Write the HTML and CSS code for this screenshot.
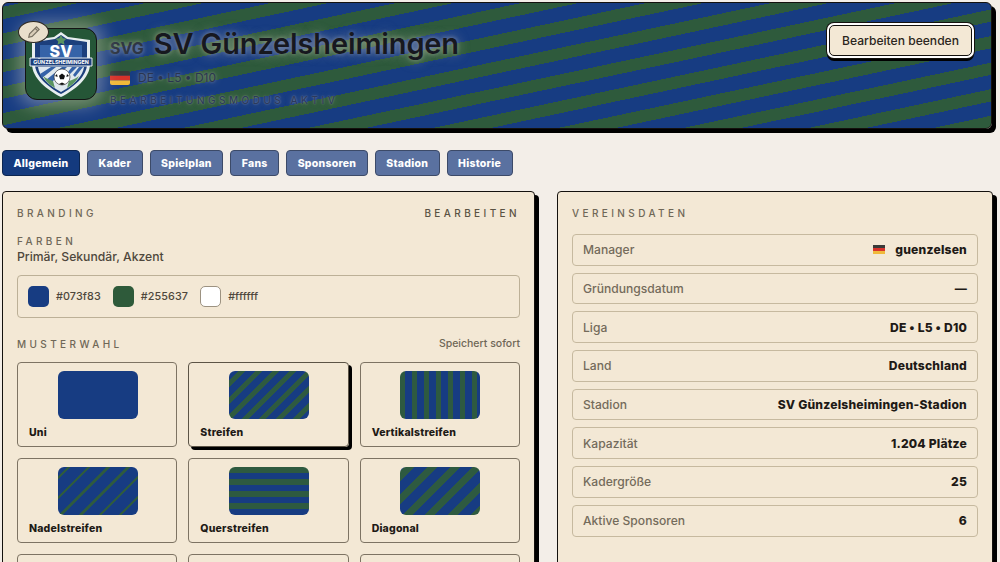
FILE: index.html
```html
<!doctype html>
<html lang="de">
  <head>
    <meta charset="UTF-8" />
    <meta name="viewport" content="width=device-width, initial-scale=1.0" />
    <title>SV Günzelsheimingen</title>
    <link rel="stylesheet" href="styles.css">
  </head>

  <body>
    <!-- Header -->
    <header class="hero">
      <div class="hero-main">
        <div class="crest-wrap">
          <button class="crest-edit" aria-label="Logo bearbeiten">
            <svg width="14" height="14" viewBox="0 0 12 12">
              <path d="M1.500 10.500 L2.200 7.600 L8.200 1.600 L10.400 3.800 L4.400 9.800 Z" fill="#d9cdb8" stroke="#7a7263" stroke-width="1"/>
              <path d="M7 2.800 L9.200 5" stroke="#7a7263" stroke-width="1"/>
            </svg>
          </button>
          <div class="crest">
            <svg width="68" height="68" viewBox="0 0 68 68">
              <path d="M34 2 L41 7 L63 10 L63 34 C63 48 48 60 34 67 C20 60 5 48 5 34 L5 10 L27 7 Z" fill="#e8eef0"/>
              <path d="M34 5 L40 9 L60 12 L60 34 C60 46 47 57 34 64 C21 57 8 46 8 34 L8 12 L28 9 Z" fill="#1c3f7c"/>
              <path d="M13 15 L55 15 L55 28 L13 28 Z" fill="#3563a8"/>
              <path d="M34 5 l1.800 3.300 3.600.5-2.600 2.500.7 3.500-3.500-1.700-3.500 1.700.7-3.500-2.600-2.500 3.600-.5z" fill="#5a9460"/>
              <text x="34" y="27" class="crest-sv">SV</text>
              <path d="M3 28 L65 28 L65 36 L3 36 Z" fill="#1c3f7c" stroke="#e8eef0" stroke-width="1"/>
              <text x="34" y="34" class="crest-name">GÜNZELSHEIMINGEN</text>
              <path d="M11 37 L57 37 C56 46 47 55 34 62 C21 55 12 46 11 37 Z" fill="#dfe8ee"/>
              <path d="M13 44 L24 37 L29 37 L15 48 Z M19 50 L35 37 L40 37 L23 54 Z M45 37 L50 37 L43 44 L41 42 Z M52 37 L56 37 L48 47 L46 45 Z" fill="#3563a8"/>
              <path d="M16 46 C19 52 23 55 28 58 L26 51 C23 50 20 49 16 46 Z M52 46 C49 52 45 55 40 58 L42 51 C45 50 48 49 52 46 Z" fill="#5a9460"/>
              <circle cx="35" cy="47" r="8" fill="#fff" stroke="#222" stroke-width=".6"/>
              <path d="M35 43.500 l3 2.200-1.100 3.500h-3.800l-1.100-3.500z M28 46 l2-2 .6 3z M42 46 l-2-2-.6 3z M32 54 l3 1 3-1-3-1.500z" fill="#111"/>
            </svg>
          </div>
        </div>

        <div class="hero-text">
          <div class="hero-title">
            <span class="hero-short">SVG</span>
            <h1>SV Günzelsheimingen</h1>
          </div>
          <div class="hero-meta">
            <svg class="flag flag-hero" viewBox="0 0 3 2" preserveAspectRatio="none">
              <rect width="3" height=".67" fill="#3a3a38"/>
              <rect y=".67" width="3" height=".67" fill="#d8322a"/>
              <rect y="1.340" width="3" height=".66" fill="#f0b93a"/>
            </svg>
            <span>DE • L5 • D10</span>
          </div>
          <div class="hero-mode">BEARBEITUNGSMODUS AKTIV</div>
        </div>
      </div>
      <button class="hero-btn">Bearbeiten beenden</button>
    </header>

    <!-- Tabs -->
    <nav class="tabs">
      <a class="tab active">Allgemein</a>
      <a class="tab">Kader</a>
      <a class="tab">Spielplan</a>
      <a class="tab">Fans</a>
      <a class="tab">Sponsoren</a>
      <a class="tab">Stadion</a>
      <a class="tab">Historie</a>
    </nav>

    <main class="columns">
      <!-- Branding -->
      <section class="card">
        <div class="card-head">
          <span class="eyebrow">BRANDING</span>
          <span class="eyebrow eyebrow-strong">BEARBEITEN</span>
        </div>

        <div class="eyebrow sub-label">FARBEN</div>
        <div class="sub-text">Primär, Sekundär, Akzent</div>

        <div class="colors">
          <span class="color"><i class="chip chip-primary"></i>#073f83</span>
          <span class="color"><i class="chip chip-secondary"></i>#255637</span>
          <span class="color"><i class="chip chip-accent"></i>#ffffff</span>
        </div>

        <div class="pattern-head">
          <span class="eyebrow">MUSTERWAHL</span>
          <span class="pattern-note">Speichert sofort</span>
        </div>

        <div class="patterns">
          <div class="pattern"><div class="swatch uni"></div><b>Uni</b></div>
          <div class="pattern selected"><div class="swatch streifen"></div><b>Streifen</b></div>
          <div class="pattern"><div class="swatch vertikal"></div><b>Vertikalstreifen</b></div>
          <div class="pattern"><div class="swatch nadel"></div><b>Nadelstreifen</b></div>
          <div class="pattern"><div class="swatch quer"></div><b>Querstreifen</b></div>
          <div class="pattern"><div class="swatch diagonal"></div><b>Diagonal</b></div>
          <div class="pattern"></div>
          <div class="pattern"></div>
          <div class="pattern"></div>
        </div>
      </section>

      <!-- Vereinsdaten -->
      <section class="card">
        <div class="card-head">
          <span class="eyebrow">VEREINSDATEN</span>
        </div>
        <div class="facts">
          <div class="fact">
            <span>Manager</span>
            <strong class="fact-manager">
              <svg class="flag flag-small" viewBox="0 0 3 2" preserveAspectRatio="none">
                <rect width="3" height=".67" fill="#3a3a38"/>
                <rect y=".67" width="3" height=".67" fill="#d8322a"/>
                <rect y="1.340" width="3" height=".66" fill="#f0b93a"/>
              </svg>
              guenzelsen
            </strong>
          </div>
          <div class="fact"><span>Gründungsdatum</span><strong>—</strong></div>
          <div class="fact"><span>Liga</span><strong>DE • L5 • D10</strong></div>
          <div class="fact"><span>Land</span><strong>Deutschland</strong></div>
          <div class="fact"><span>Stadion</span><strong>SV Günzelsheimingen-Stadion</strong></div>
          <div class="fact"><span>Kapazität</span><strong>1.204 Plätze</strong></div>
          <div class="fact"><span>Kadergröße</span><strong>25</strong></div>
          <div class="fact"><span>Aktive Sponsoren</span><strong>6</strong></div>
        </div>
      </section>
    </main>
  </body>
</html>
```

FILE: styles.css
```css
* {
  box-sizing: border-box;
}

html,
body {
  height: 562px;
  overflow: hidden;
}

body {
  margin: 0;
  padding: 2px 7px 0 2px;
  background: #f3eee8;
  color: #1e1a16;
  font-family: Inter, "Liberation Sans", sans-serif;
}

/* Header */
.hero {
  display: flex;
  justify-content: space-between;
  align-items: flex-start;
  height: 127px;
  margin-right: 1px;
  padding: 20px 19px 0 16px;
  border: 1px solid #14110e;
  border-radius: 6px;
  box-shadow: 4px 4px 0 #000;
  background: repeating-linear-gradient(-12deg, #2e5a3c 0, #2e5a3c 12px, #173c82 12px, #173c82 26px);
}

.hero-main {
  display: flex;
  gap: 13px;
}

.crest-wrap {
  position: relative;
  margin-top: 5px;
  padding-left: 6px;
}

.crest {
  display: flex;
  align-items: center;
  justify-content: center;
  width: 72px;
  height: 72px;
  border: 1px solid #141414;
  border-radius: 12px;
  background: #255637;
  box-shadow: 0 0 18px 6px rgba(243, 232, 213, 0.38);
}

.crest-edit {
  position: absolute;
  top: -7px;
  left: -1px;
  display: flex;
  align-items: center;
  justify-content: center;
  width: 31px;
  height: 22px;
  padding: 0;
  border: 1px solid #2b2620;
  border-radius: 50%;
  background: #e9dfcc;
}

.crest-sv {
  fill: #fff;
  font-size: 16px;
  font-weight: 800;
  text-anchor: middle;
}

.crest-name {
  fill: #fff;
  font-size: 5.300px;
  font-weight: 700;
  text-anchor: middle;
}

.hero-text {
  padding-top: 3px;
}

.hero-title {
  display: flex;
  align-items: baseline;
  gap: 10px;
  height: 36px;
}

.hero-title h1 {
  margin: 0;
  color: #17181f;
  font-size: 29px;
  font-weight: 600;
  letter-spacing: -0.15px;
  line-height: 36px;
  text-shadow: 0 0 4px rgba(243, 232, 213, 0.35), 0 0 12px rgba(243, 232, 213, 0.5);
}

.hero-short {
  color: #2e3644;
  font-size: 16px;
  font-weight: 700;
  text-shadow: 0 0 4px rgba(243, 232, 213, 0.4), 0 0 10px rgba(243, 232, 213, 0.4);
}

.hero-meta {
  display: flex;
  align-items: center;
  gap: 8px;
  margin-top: 8px;
  color: #2a3550;
  font-size: 12px;
  text-shadow: 0 0 3px rgba(243, 232, 213, 0.45), 0 0 8px rgba(243, 232, 213, 0.4);
}

.flag {
  display: block;
}

.flag-hero {
  width: 20px;
  height: 14px;
  border-radius: 2px;
}

.flag-small {
  width: 12px;
  height: 9px;
}

.hero-mode {
  margin-top: 9px;
  color: #2c3a5c;
  font-size: 10px;
  font-weight: 500;
  letter-spacing: 0.35em;
  text-shadow: 0 0 2px rgba(243, 232, 213, 0.45), 0 0 6px rgba(243, 232, 213, 0.25);
}

.hero-btn {
  height: 31px;
  margin-top: 2px;
  padding: 0 12px;
  border: 1px solid #14110e;
  border-radius: 5px;
  background: #f3e8d5;
  color: #2b2620;
  font-family: inherit;
  font-size: 12.100px;
  font-weight: 500;
  box-shadow: 0 0 0 2px #fff, 0 0 0 3px #14110e, 0 3px 0 2px #000;
}

/* Tabs */
.tabs {
  display: flex;
  gap: 7px;
  margin-top: 21px;
}

.tab {
  display: flex;
  align-items: center;
  height: 26px;
  padding: 0 10.500px;
  border: 1px solid #3c4a68;
  border-radius: 4px;
  background: #5a71a0;
  color: #fff;
  font-size: 10.500px;
  font-weight: 800;
  letter-spacing: 0.25px;
}

.tab.active {
  background: #143a7e;
  border-color: #0c2550;
}

/* Cards */
.columns {
  display: grid;
  grid-template-columns: 533px 436px;
  gap: 22px;
  margin-top: 15px;
}

.card {
  height: 500px;
  padding: 15px 14px;
  border: 1px solid #14110e;
  border-radius: 4px;
  background: #f3e8d5;
  box-shadow: 4px 4px 0 #000;
}

.card-head {
  display: flex;
  justify-content: space-between;
}

.eyebrow {
  color: #6f6757;
  font-size: 10px;
  font-weight: 500;
  letter-spacing: 0.34em;
}

.eyebrow-strong {
  color: #5a5243;
}

.sub-label {
  margin-top: 16px;
}

.sub-text {
  margin-top: 2px;
  color: #4e473c;
  font-size: 12.200px;
  font-weight: 500;
}

.colors {
  display: flex;
  gap: 12px;
  align-items: center;
  height: 43px;
  margin-top: 11px;
  padding: 0 10px;
  border: 1px solid #bcb097;
  border-radius: 4px;
}

.color {
  display: flex;
  align-items: center;
  gap: 7px;
  color: #4e473c;
  font-size: 10.800px;
  font-weight: 500;
  letter-spacing: 0.1px;
}

.chip {
  width: 21px;
  height: 21px;
  border-radius: 5px;
}

.chip-primary {
  background: #173c82;
}

.chip-secondary {
  background: #2e5a3a;
}

.chip-accent {
  background: #fff;
  border: 1px solid #9c9281;
}

.pattern-head {
  display: flex;
  justify-content: space-between;
  align-items: center;
  margin-top: 19px;
}

.pattern-note {
  color: #6f6757;
  font-size: 10.500px;
  font-weight: 500;
}

.patterns {
  display: grid;
  grid-template-columns: repeat(3, 1fr);
  gap: 11px;
  margin-top: 12px;
}

.pattern {
  height: 85px;
  padding: 8px 11px 8px 11.800px;
  border: 1px solid #7d7363;
  border-radius: 4px;
}

.pattern.selected {
  border-color: #5c5446;
  box-shadow: 3px 3px 0 #000;
}

.pattern b {
  display: block;
  margin: 7px 0 0 -0.800px;
  font-size: 10.500px;
  font-weight: 800;
  letter-spacing: 0.2px;
}

.swatch {
  width: 80px;
  height: 48px;
  margin: 0 auto;
  border-radius: 6px;
}

.uni {
  background: #173c82;
}

.streifen {
  background: repeating-linear-gradient(-45deg, #173c82 0, #173c82 7px, #2e5a40 7px, #2e5a40 12px);
}

.vertikal {
  background: repeating-linear-gradient(90deg, #2e5a40 0, #2e5a40 5px, #173c82 5px, #173c82 12px);
}

.nadel {
  background: repeating-linear-gradient(-45deg, #173c82 0, #173c82 11.500px, #2e5a40 11.500px, #2e5a40 14px);
}

.quer {
  background: repeating-linear-gradient(0deg, #173c82 0, #173c82 6px, #2e5a40 6px, #2e5a40 12px);
}

.diagonal {
  background: repeating-linear-gradient(-45deg, #2e5a40 0, #2e5a40 7px, #173c82 7px, #173c82 16px);
}

/* Facts */
.facts {
  display: flex;
  flex-direction: column;
  gap: 7px;
  margin-top: 15px;
}

.fact {
  display: flex;
  justify-content: space-between;
  align-items: center;
  height: 31.700px;
  padding: 0 10px;
  border: 1px solid #c6b99f;
  border-radius: 4px;
  color: #746b5b;
  font-size: 12.100px;
  font-weight: 500;
}

.fact strong {
  color: #1e1a16;
  font-weight: 800;
  letter-spacing: 0.2px;
}

.fact-manager {
  display: flex;
  align-items: center;
  gap: 10px;
}
```
